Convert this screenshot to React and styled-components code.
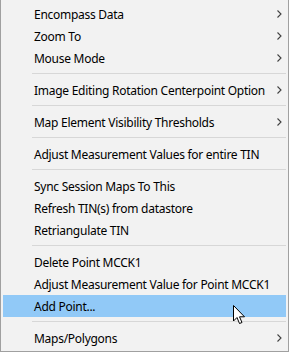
import React from 'react';
import styled, { createGlobalStyle } from 'styled-components';

const GlobalStyle = createGlobalStyle`
  html, body {
    margin: 0;
    padding: 0;
    background: #f2f2f2;
  }
`;

const Menu = styled.ul`
  position: relative;
  box-sizing: border-box;
  width: 289px;
  height: 352px;
  margin: 0;
  padding: 3px 2px 2px 2px;
  list-style: none;
  background: #f2f2f2;
  border: 1px solid #a0a0a0;
  border-top: none;
  font-family: "Noto Sans", "Open Sans", sans-serif;
  font-size: 12px;
  letter-spacing: -0.27px;
  color: #000;
`;

const Item = styled.li`
  display: flex;
  align-items: center;
  height: 22px;
  padding: 0 4px 0 31px;
  background: ${(p) => (p.active ? '#91c9f7' : 'transparent')};
  white-space: nowrap;
  .label {
    flex: 1;
    min-width: 0;
    padding-top: 1px;
  }
`;

const Separator = styled.li`
  height: 10px;
  display: flex;
  align-items: flex-start;
  padding: 4px 0 0 29px;
  box-sizing: border-box;
  &::after {
    content: '';
    display: block;
    flex: 1;
    height: 1px;
    background: #d7d7d7;
  }
`;

const Cursor = styled.svg`
  position: absolute;
  left: 232px;
  top: 305px;
  pointer-events: none;
`;

const Chevron = () => (
  <svg width="5" height="8" viewBox="0 0 5 8">
    <path d="M0.5 0.5 L4 4 L0.5 7.5" fill="none" stroke="#404040" strokeWidth="1.1" />
  </svg>
);

const items = [
  { label: 'Encompass Data', sub: true },
  { label: 'Zoom To', sub: true },
  { label: 'Mouse Mode', sub: true },
  { sep: true },
  { label: 'Image Editing Rotation Centerpoint Option', sub: true },
  { sep: true },
  { label: 'Map Element Visibility Thresholds', sub: true },
  { sep: true },
  { label: 'Adjust Measurement Values for entire TIN' },
  { sep: true },
  { label: 'Sync Session Maps To This' },
  { label: 'Refresh TIN(s) from datastore' },
  { label: 'Retriangulate TIN' },
  { sep: true },
  { label: 'Delete Point MCCK1' },
  { label: 'Adjust Measurement Value for Point MCCK1' },
  { label: 'Add Point...', active: true },
  { sep: true },
  { label: 'Maps/Polygons', sub: true },
];

const App = () => (
  <>
    <GlobalStyle />
    <Menu>
      {items.map((it, i) =>
        it.sep ? (
          <Separator key={i} />
        ) : (
          <Item key={i} active={it.active}>
            <span className="label">{it.label}</span>
            {it.sub && <Chevron />}
          </Item>
        )
      )}
      <Cursor width="13" height="20" viewBox="0 0 13 20">
        <path
          d="M0.5 0.5 L0.5 16 L4 12.5 L6.5 18.5 L9 17.5 L6.5 11.8 L11.5 11.8 Z"
          fill="#fff"
          stroke="#000"
          strokeWidth="1"
          strokeLinejoin="miter"
        />
      </Cursor>
    </Menu>
  </>
);

export default App;
